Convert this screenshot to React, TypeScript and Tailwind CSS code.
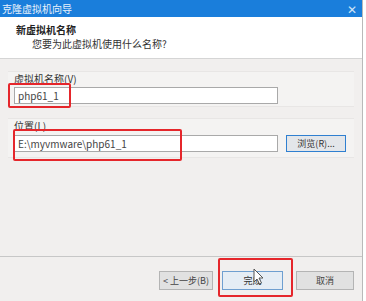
import React from "react";

const font = { fontFamily: '"Noto Sans CJK SC", "Liberation Sans", sans-serif' };

function RedBox({ className }: { className: string }) {
  return (
    <div
      className={`absolute border-2 border-[#e5262b] rounded-[2px] pointer-events-none ${className}`}
    />
  );
}

export default function App() {
  return (
    <div className="relative w-[366px] h-[301px] overflow-hidden bg-white flex" style={font}>
      <div className="w-[363px] h-full flex flex-col border-r border-[#b9b9b9]">
        {/* title bar */}
        <div className="h-[17px] bg-[#1a7edb] flex items-center justify-between pl-[2px] pr-[5px] text-white text-[10px] leading-none">
          <span className="opacity-90">克隆虚拟机向导</span>
          <span className="text-[12px] leading-none text-[#cfe3f7]">✕</span>
        </div>
        {/* header */}
        <div className="h-[42px] bg-white border-b border-[#d5d5d5] pl-[16px] pt-[7px] flex flex-col gap-[2px]">
          <div className="text-[10px] leading-[12px] font-bold text-[#222]">新虚拟机名称</div>
          <div className="pl-[16px] text-[10px] leading-[12px] text-[#333]">您要为此虚拟机使用什么名称?</div>
        </div>
        {/* body */}
        <div className="flex-1 bg-[#f1efee] px-[8px] pt-[12px] flex flex-col gap-[11px]">
          <div className="flex flex-col bg-[#f4f3f2] border-y border-[#e8e6e5] pl-[6px] pb-[2px]">
            <div className="text-[10px] leading-[12px] text-[#333] h-[15px] pt-[1px]">虚拟机名称(V)</div>
            <div className="w-[264px] h-[17px] bg-white border border-[#a9a9a9] flex items-center pl-[3px] text-[10px] text-[#444]">
              php61_1
            </div>
          </div>
          <div className="flex flex-col bg-[#f4f3f2] border-y border-[#e8e6e5] pl-[6px] pb-[5px]">
            <div className="text-[10px] leading-[12px] text-[#333] h-[16px] pt-[1px]">位置(L)</div>
            <div className="flex items-center gap-[8px]">
              <div className="w-[264px] h-[17px] bg-white border border-[#a9a9a9] flex items-center pl-[3px] text-[10px] text-[#444]">
                E:\myvmware\php61_1
              </div>
              <div className="w-[60px] h-[17px] bg-[#e3e6ea] border border-[#2f7fd0] flex items-center justify-center text-[9px] text-[#333]">
                浏览(R)...
              </div>
            </div>
          </div>
        </div>
        {/* footer */}
        <div className="h-[45px] bg-[#f1efee] border-t border-[#c7c7c7] flex items-start pt-[14px] pl-[159px] gap-[9px]">
          <div className="w-[54px] h-[19px] bg-[#e1e1e1] border border-[#b4b4b4] flex items-center justify-center text-[9px] text-[#444]">
            &lt; 上一步(B)
          </div>
          <div className="w-[61px] h-[19px] bg-[#e5edf5] border border-[#6f9fd0] flex items-center justify-center text-[9px] text-[#333]">
            完成
          </div>
          <div className="ml-[4px] w-[58px] h-[19px] bg-[#e1e1e1] border border-[#b4b4b4] flex items-center justify-center text-[9px] text-[#444]">
            取消
          </div>
        </div>
      </div>

      {/* annotations */}
      <RedBox className="left-[8px] top-[83px] w-[63px] h-[25px]" />
      <RedBox className="left-[13px] top-[129px] w-[169px] h-[32px]" />
      <RedBox className="left-[218px] top-[258px] w-[75px] h-[39px]" />

      {/* cursor */}
      <svg className="absolute left-[253px] top-[268px]" width="11" height="17" viewBox="0 0 11 17">
        <path d="M1 1 L1 14 L4 11 L6.5 16 L8.5 15 L6 10 L10 10 Z" fill="#fff" stroke="#555" strokeWidth="1" strokeLinejoin="round" />
      </svg>
    </div>
  );
}
